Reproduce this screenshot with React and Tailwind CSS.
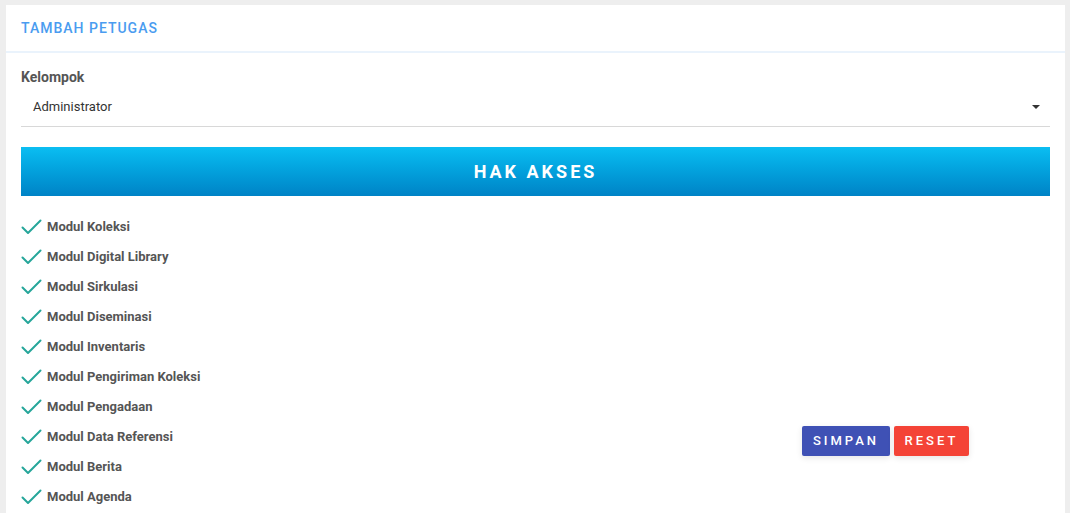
import React from 'react';

const MODULES = [
  'Modul Koleksi',
  'Modul Digital Library',
  'Modul Sirkulasi',
  'Modul Diseminasi',
  'Modul Inventaris',
  'Modul Pengiriman Koleksi',
  'Modul Pengadaan',
  'Modul Data Referensi',
  'Modul Berita',
  'Modul Agenda',
];

function Check() {
  return (
    <svg width="21" height="16" viewBox="0 0 21 16" fill="none" className="shrink-0">
      <path d="M1.5 8.5 L7 14 L19.5 1.5" stroke="#26a69a" strokeWidth="2" strokeLinecap="round" strokeLinejoin="round" />
    </svg>
  );
}

export default function App() {
  return (
    <div className="bg-[#eeeeee] pt-[5px] pl-[6px] pr-[5px] font-['Roboto',sans-serif] overflow-hidden h-[513px]">
      <div className="bg-white h-full">
        {/* Header */}
        <div className="h-[48px] px-[15px] flex items-center border-b-2 border-[#eaf3fc]">
          <h2 className="text-[14px] font-medium tracking-[1px] text-[#4a9cf0]">TAMBAH PETUGAS</h2>
        </div>

        <div className="px-[15px] pt-[15px]">
          <label className="block text-[14px] font-bold text-[#555555] leading-[18px]">Kelompok</label>
          <div className="h-[41px] pt-[2px] border-b border-[#d8d8d8] flex items-center justify-between pl-[12px] pr-[10px]">
            <span className="text-[13px] text-[#333333]">Administrator</span>
            <span className="w-0 h-0 border-l-[4px] border-r-[4px] border-t-[4px] border-l-transparent border-r-transparent border-t-[#333333]" />
          </div>

          <div className="mt-[20px] h-[49px] flex items-center justify-center bg-gradient-to-b from-[#0bbef2] to-[#0083c6]">
            <span className="text-white text-[18px] font-bold tracking-[3px]">HAK AKSES</span>
          </div>

          <div className="flex">
            <ul className="w-[781px] pt-[16px]">
              {MODULES.map((m) => (
                <li key={m} className="h-[30px] flex items-center gap-[5px]">
                  <Check />
                  <span className="text-[13px] font-bold text-[#555555]">{m}</span>
                </li>
              ))}
            </ul>
            <div className="pt-[230px] flex gap-[4px] items-start">
              <button className="h-[30px] w-[88px] rounded-[2px] bg-[#3f51b5] text-white text-[13px] font-medium tracking-[3px] shadow-[0_2px_6px_rgba(0,0,0,0.1)]">
                SIMPAN
              </button>
              <button className="h-[30px] w-[75px] rounded-[2px] bg-[#f44336] text-white text-[13px] font-medium tracking-[3px] shadow-[0_2px_6px_rgba(0,0,0,0.1)]">
                RESET
              </button>
            </div>
          </div>
        </div>
      </div>
    </div>
  );
}
